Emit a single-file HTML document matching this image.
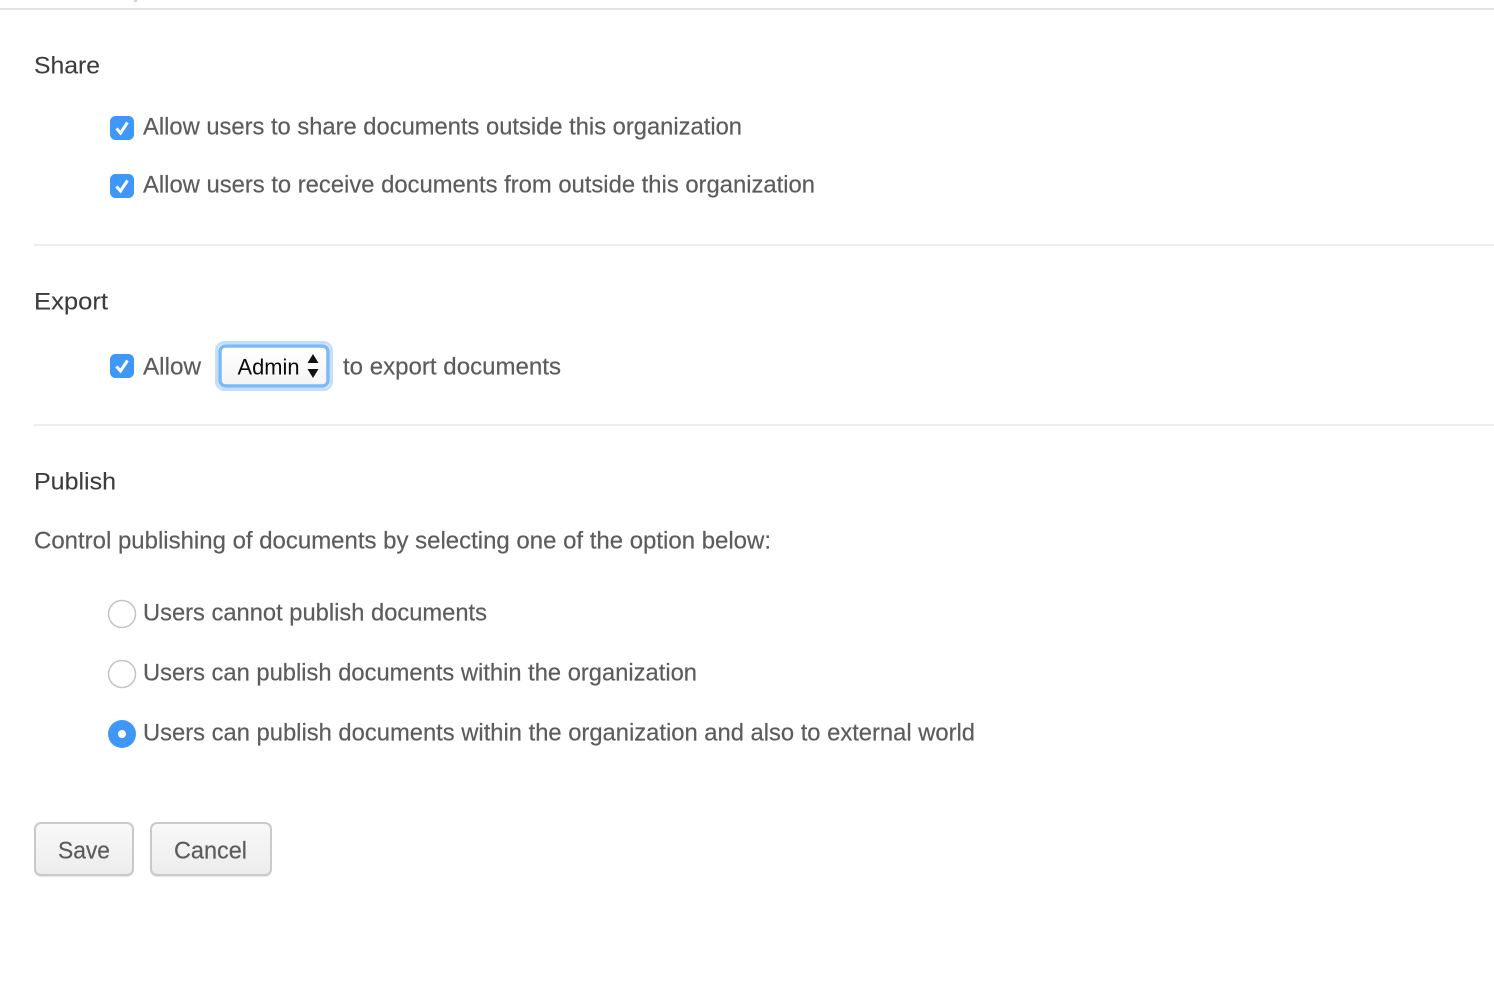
<!DOCTYPE html>
<html>
<head>
<meta charset="utf-8">
<style>
html,body{margin:0;padding:0;background:#fff;width:1494px;height:996px;overflow:hidden}
svg{display:block}
text{font-family:"Liberation Sans",sans-serif;font-size:24px;fill:#5c5c5c;stroke:#5c5c5c;stroke-width:.2px}
.h{fill:#3c3c3c;stroke:#3c3c3c;stroke-width:.1px}
</style>
</head>
<body>
<svg width="1494" height="996" viewBox="0 0 1494 996" xmlns="http://www.w3.org/2000/svg">
<defs>
<linearGradient id="btn" x1="0" y1="0" x2="0" y2="1"><stop offset="0" stop-color="#f9f9f9"/><stop offset="1" stop-color="#ececec"/></linearGradient>
<linearGradient id="sel" x1="0" y1="0" x2="0" y2="1"><stop offset="0" stop-color="#ffffff"/><stop offset="1" stop-color="#f4f4f4"/></linearGradient>
</defs>

<rect x="0" y="8" width="1494" height="2" fill="#e4e4e4"/>
<rect x="134" y="0" width="3" height="2" fill="#d4d4d4"/>

<text class="h" x="34" y="73.500" textLength="66" lengthAdjust="spacingAndGlyphs">Share</text>

<rect x="110" y="116" width="24" height="24" rx="5.500" fill="#3f97f8"/>
<path d="M116.500 128.500 L120.500 133 L127.500 122.500" fill="none" stroke="#fff" stroke-width="3"/>
<text x="143" y="134.500" textLength="599" lengthAdjust="spacingAndGlyphs">Allow users to share documents outside this organization</text>

<rect x="110" y="174" width="24" height="24" rx="5.500" fill="#3f97f8"/>
<path d="M116.500 186.500 L120.500 191 L127.500 180.500" fill="none" stroke="#fff" stroke-width="3"/>
<text x="143" y="192.500" textLength="672" lengthAdjust="spacingAndGlyphs">Allow users to receive documents from outside this organization</text>

<rect x="34" y="244" width="1460" height="2" fill="#eeeeee"/>

<text class="h" x="34" y="309.500" textLength="74" lengthAdjust="spacingAndGlyphs">Export</text>

<rect x="110" y="354" width="24" height="24" rx="5.500" fill="#3f97f8"/>
<path d="M116.500 366.500 L120.500 371 L127.500 360.500" fill="none" stroke="#fff" stroke-width="3"/>
<text x="143" y="374.500" textLength="58" lengthAdjust="spacingAndGlyphs">Allow</text>

<rect x="216.500" y="342.500" width="115" height="47" rx="8" fill="none" stroke="#c4dffc" stroke-width="3"/>
<rect x="220" y="346" width="108" height="40" rx="5.500" fill="url(#sel)" stroke="#7db8f7" stroke-width="3.500"/>
<text x="237.500" y="374.500" textLength="62" lengthAdjust="spacingAndGlyphs" style="fill:#0a0a0a;stroke:none;font-size:22px">Admin</text>
<path d="M313 354 L318.500 363 L307.500 363 Z M313 378 L318.500 369 L307.500 369 Z" fill="#111"/>

<text x="343" y="374.500" textLength="218" lengthAdjust="spacingAndGlyphs">to export documents</text>

<rect x="34" y="424" width="1460" height="2" fill="#eeeeee"/>

<text class="h" x="34" y="489.500" textLength="82" lengthAdjust="spacingAndGlyphs">Publish</text>

<text x="34" y="548.500" textLength="737" lengthAdjust="spacingAndGlyphs">Control publishing of documents by selecting one of the option below:</text>

<circle cx="122" cy="614" r="13.500" fill="#fff" stroke="#c4c4c4" stroke-width="1.500"/>
<text x="143" y="620.500" textLength="344" lengthAdjust="spacingAndGlyphs">Users cannot publish documents</text>

<circle cx="122" cy="674" r="13.500" fill="#fff" stroke="#c4c4c4" stroke-width="1.500"/>
<text x="143" y="680.500" textLength="554" lengthAdjust="spacingAndGlyphs">Users can publish documents within the organization</text>

<circle cx="122" cy="734" r="14" fill="#3f97f8"/>
<circle cx="122" cy="734" r="4" fill="#fff"/>
<text x="143" y="740.500" textLength="832" lengthAdjust="spacingAndGlyphs">Users can publish documents within the organization and also to external world</text>

<rect x="34" y="824" width="100" height="53" rx="7" fill="#e6e6e6"/>
<rect x="35" y="823" width="98" height="52" rx="6" fill="url(#btn)" stroke="#cacaca" stroke-width="2"/>
<text x="58" y="858.500" textLength="52" lengthAdjust="spacingAndGlyphs">Save</text>

<rect x="150" y="824" width="122" height="53" rx="7" fill="#e6e6e6"/>
<rect x="151" y="823" width="120" height="52" rx="6" fill="url(#btn)" stroke="#cacaca" stroke-width="2"/>
<text x="174" y="858.500" textLength="73" lengthAdjust="spacingAndGlyphs">Cancel</text>
</svg>
</body>
</html>
